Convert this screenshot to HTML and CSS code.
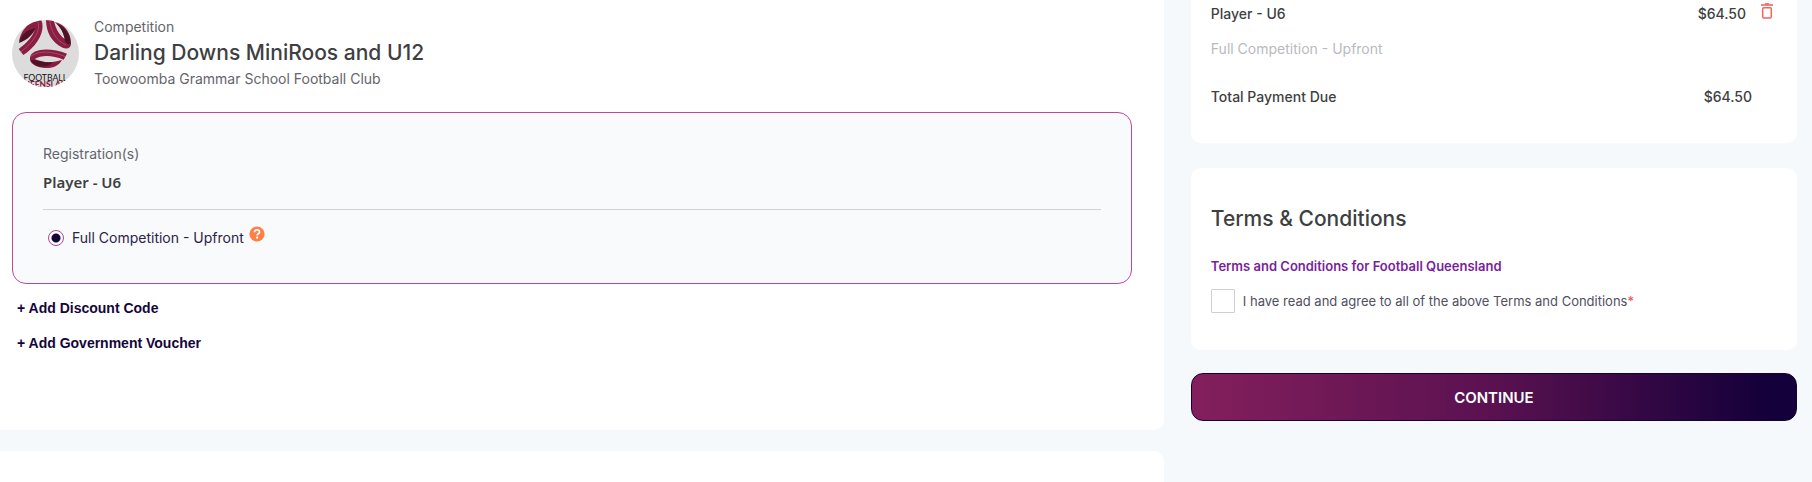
FILE: index.html
```html
<!DOCTYPE html>
<html lang="en">

<head>
	<meta charset="utf-8" />
	<title>Registration Payment</title>
	<link rel="stylesheet" href="styles.css">
</head>

<body>
	<div class="page">
		<main class="main-col">
			<section class="card competition">
				<div class="comp-header">
					<svg class="comp-logo" viewBox="6 9 201 201" role="img" aria-label="Football Queensland">
						<defs>
							<clipPath id="logoClip"><circle cx="106.5" cy="109.5" r="100.5" /></clipPath>
						</defs>
						<g clip-path="url(#logoClip)">
							<rect x="6" y="9" width="201" height="201" fill="#dcdcdc" />
							<!-- left ribbon -->
							<path d="M27 76C30 42 56 12 93 7C108 38 86 84 40 114L26 96C52 76 68 58 74 38C54 44 38 56 27 76Z" fill="#8b1d42" />
							<path d="M27 78C32 54 52 38 76 34C70 52 52 70 27 78Z" fill="#4d1224" />
							<path d="M84 14C92 42 72 74 33 104" fill="none" stroke="#b8778c" stroke-width="1.5" />
							<!-- right ribbon -->
							<path d="M108 7H131C136 34 146 52 164 66C160 44 150 28 134 16C162 20 184 48 183 80C183 92 172 98 158 92C124 76 108 44 108 7Z" fill="#8b1d42" />
							<path d="M140 20C164 28 184 52 181 82C170 82 162 74 164 64C160 46 152 32 140 20Z" fill="#4d1224" />
							<path d="M119 8C122 44 140 72 168 84" fill="none" stroke="#b8778c" stroke-width="1.5" />
							<!-- bottom ribbon -->
							<path d="M60 122C64 94 120 90 171 110L161 128C126 114 94 114 74 126C100 138 130 138 156 128C146 148 124 156 98 152C74 148 58 138 60 122Z" fill="#8b1d42" />
							<path d="M62 130C82 126 104 142 128 136C116 154 74 154 62 130Z" fill="#4d1224" />
							<path d="M62 118C86 100 128 102 166 119" fill="none" stroke="#b8778c" stroke-width="1.5" />
							<text x="106" y="191" text-anchor="middle" class="logo-name">FOOTBALL</text>
							<text x="106" y="211" text-anchor="middle" class="logo-state">QUEENSLAND</text>
						</g>
					</svg>
					<div class="comp-info">
						<div class="caption">Competition</div>
						<h1 class="comp-title">Darling Downs MiniRoos and U12</h1>
						<div class="caption">Toowoomba Grammar School Football Club</div>
					</div>
				</div>

				<div class="registration-box">
					<div class="reg-label">Registration(s)</div>
					<div class="reg-name">Player - U6</div>
					<div class="payment-option">
						<input type="radio" id="upfront" name="paymentOption" class="radio" checked />
						<label for="upfront">Full Competition - Upfront</label>
						<svg class="help-icon" viewBox="0 0 16 16" role="img" aria-label="Help">
							<circle cx="8" cy="8" r="7.6" fill="#ff8045" />
							<path d="M5.6 6.2C5.6 4.6 6.6 3.8 8 3.8C9.5 3.8 10.5 4.7 10.5 5.9C10.5 7.5 8.2 7.5 8.2 9.4" fill="none" stroke="#fff" stroke-width="1.7" />
							<circle cx="8.1" cy="11.7" r="1.1" fill="#fff" />
						</svg>
					</div>
				</div>

				<button type="button" class="add-btn">+ Add Discount Code</button>
				<button type="button" class="add-btn">+ Add Government Voucher</button>
			</section>

			<section class="card next-card"></section>
		</main>

		<aside class="side-col">
			<section class="card summary">
				<div class="summary-row">
					<span>Player - U6</span>
					<span class="price">$64.50</span>
					<button type="button" class="delete-btn" aria-label="Remove">
						<svg viewBox="0 0 12 16" width="12" height="16" fill="none" stroke="#f5635c">
							<path d="M0 2H12" stroke-width="1.6" />
							<path d="M4 .8H8" stroke-width="1.4" />
							<rect x="1.7" y="4.8" width="8.6" height="10.2" rx="1.2" stroke-width="1.5" />
						</svg>
					</button>
				</div>
				<div class="summary-option">Full Competition - Upfront</div>
				<div class="summary-row total">
					<span>Total Payment Due</span>
					<span class="price">$64.50</span>
				</div>
			</section>

			<section class="card terms">
				<h2 class="terms-title">Terms &amp; Conditions</h2>
				<a href="#" class="terms-link">Terms and Conditions for Football Queensland</a>
				<div class="agree">
					<input type="checkbox" id="agree" class="checkbox" />
					<label for="agree">I have read and agree to all of the above Terms and Conditions<span class="required">*</span></label>
				</div>
			</section>

			<button type="button" class="continue-btn">CONTINUE</button>
		</aside>
	</div>
</body>

</html>
```
FILE: styles.css
```css
* {
	box-sizing: border-box;
}

body {
	margin: 0;
	background-color: #f6f9fc;
	font-family: Inter, "Liberation Sans", sans-serif;
	font-size: 14px;
	color: #3e3f42;
}

button {
	font-family: inherit;
	cursor: pointer;
}

.page {
	display: grid;
	grid-template-columns: 48fr 25fr;
	gap: 27px;
	padding-right: 15px;
	min-height: 100vh;
}

.card {
	background-color: #fff;
	border-radius: 10px;
}

/* Left column */
.main-col {
	display: flex;
	flex-direction: column;
	gap: 21px;
}

.competition {
	padding: 15px 32px 69px 12px;
	border-radius: 0 0 10px 0;
}

.next-card {
	flex: 1;
	border-radius: 0 10px 0 0;
}

.comp-header {
	display: flex;
	align-items: center;
	gap: 15px;
	margin-bottom: 21px;
}

.comp-logo {
	width: 67px;
	height: 67px;
}

.logo-name {
	font: 26px Lato, sans-serif;
	fill: #111;
}

.logo-state {
	font: 900 25px Lato, sans-serif;
	fill: #8b1d42;
}

.caption {
	line-height: 24px;
	color: #64656b;
}

.comp-title {
	margin: 0;
	font-size: 21px;
	font-weight: 500;
	line-height: 28px;
}

.registration-box {
	padding: 27px 30px 33px;
	border: 1px solid #c0489b;
	border-radius: 14px;
	background-color: #f8fafc;
	margin-bottom: 7px;
}

.reg-label {
	line-height: 28px;
	color: #64656b;
}

.reg-name {
	padding-bottom: 13px;
	border-bottom: 1px solid #cfd2d6;
	font-family: "Noto Sans", sans-serif;
	font-size: 15px;
	font-weight: 600;
	line-height: 28px;
}

.payment-option {
	display: flex;
	align-items: center;
	margin-top: 16px;
	padding-left: 5px;
	line-height: 24px;
	color: #2c2446;
}

.radio {
	appearance: none;
	width: 16px;
	height: 16px;
	margin: 0 8px 0 0;
	border: 1px solid #b4419c;
	border-radius: 50%;
	background: radial-gradient(circle, #14063a 4px, #fff 5px);
}

.help-icon {
	align-self: flex-start;
	width: 16px;
	height: 16px;
	margin-left: 5px;
}

.add-btn {
	display: block;
	padding: 0 5px;
	border: 0;
	background: none;
	font-family: "Liberation Sans", sans-serif;
	font-size: 14px;
	font-weight: 700;
	line-height: 35px;
	color: #14063a;
}

/* Right column */
.summary {
	padding: 2px 20px 34px;
	border-radius: 0 0 10px 10px;
}

.summary-row {
	display: flex;
	align-items: center;
	font-weight: 500;
	line-height: 24px;
}

.price {
	margin-left: auto;
}

.delete-btn {
	display: flex;
	margin: 0 4px 6px 15px;
	padding: 0;
	border: 0;
	background: none;
}

.summary-option {
	margin: 11px 0 24px;
	line-height: 24px;
	color: #b9bac0;
}

.total {
	padding-right: 25px;
}

.terms {
	margin-top: 25px;
	padding: 37px 20px;
}

.terms-title {
	margin: 0 0 23px;
	font-size: 21px;
	font-weight: 500;
	line-height: 28px;
}

.terms-link {
	display: block;
	font-size: 13px;
	font-weight: 600;
	line-height: 20px;
	text-decoration: none;
	color: #7a1f9c;
}

.agree {
	display: flex;
	align-items: center;
	margin-top: 13px;
	font-size: 13px;
	line-height: 24px;
	color: #50505f;
}

.checkbox {
	appearance: none;
	width: 24px;
	height: 24px;
	margin: 0 8px 0 0;
	border: 1px solid #cfcfd4;
	border-radius: 1px;
	background-color: #fff;
}

.required {
	color: #f04848;
}

.continue-btn {
	width: 100%;
	height: 48px;
	margin-top: 23px;
	border: 1px solid #14003a;
	border-radius: 12px;
	background: linear-gradient(90deg, #831f5c, #5a1150 50%, #14003a 95%);
	font-size: 15px;
	font-weight: 600;
	color: #fff;
}
```
